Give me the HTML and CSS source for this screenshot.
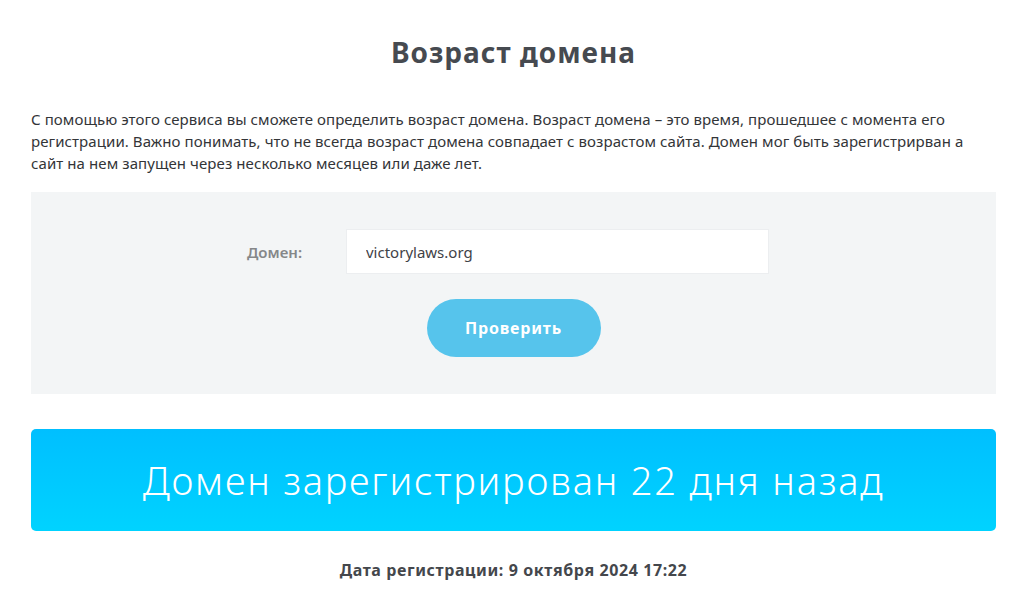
FILE: index.html
```html
<!DOCTYPE html>
<html lang="ru">
<head>
<meta charset="utf-8">
<title>Возраст домена</title>
<link rel="stylesheet" href="styles.css">
</head>
<body>
<main class="page">
  <h1 class="title">Возраст домена</h1>
  <p class="intro">С помощью этого сервиса вы сможете определить возраст домена. Возраст домена – это время, прошедшее с момента его регистрации. Важно понимать, что не всегда возраст домена совпадает с возрастом сайта. Домен мог быть зарегистрирван а сайт на нем запущен через несколько месяцев или даже лет.</p>
  <form class="check-form">
    <div class="field-row">
      <label class="field-label" for="domain">Домен:</label>
      <input class="field-input" id="domain" type="text" value="victorylaws.org">
    </div>
    <button class="check-btn" type="button">Проверить</button>
  </form>
  <div class="result">Домен зарегистрирован 22 дня назад</div>
  <p class="reg-date">Дата регистрации: 9 октября 2024 17:22</p>
</main>
</body>
</html>
```
FILE: styles.css
```css
* { box-sizing: border-box; }
html, body { margin: 0; padding: 0; background: #fff; }
body { font-family: "Noto Sans", "Open Sans", sans-serif; color: #3a3d42; }
.page { padding: 0 28px 0 31px; }
.title {
  margin: 0;
  padding-top: 35px;
  height: 108px;
  text-align: center;
  font-size: 28px;
  font-weight: 700;
  letter-spacing: 1px;
  line-height: 34px;
  color: #464a50;
}
.intro {
  margin: 0;
  font-size: 15px;
  line-height: 22px;
  letter-spacing: 0.08px;
  color: #333538;
}
.check-form {
  margin-top: 18px;
  background: #f3f5f6;
  height: 202px;
  padding-top: 37px;
  display: flex;
  flex-direction: column;
  align-items: center;
}
.field-row {
  display: flex;
  align-items: center;
  margin-right: 11px;
}
.field-label {
  width: 99px;
  font-size: 15px;
  font-weight: 600;
  color: #858789;
}
.field-input {
  width: 423px;
  height: 45px;
  border: 1px solid #eceef0;
  background: #fff;
  padding: 0 19px;
  font-family: inherit;
  font-size: 15px;
  color: #3f4247;
  outline: none;
}
.check-btn {
  margin-top: 25px;
  width: 174px;
  height: 58px;
  border: none;
  border-radius: 29px;
  background: #56c4ec;
  color: #fff;
  font-family: inherit;
  font-size: 16px;
  font-weight: 700;
  letter-spacing: 0.8px;
}
.result {
  margin-top: 35px;
  height: 102px;
  border-radius: 5px;
  background: linear-gradient(to bottom, #00bfff, #00d3ff);
  color: #fff;
  display: flex;
  align-items: center;
  justify-content: center;
  font-size: 38px;
  font-weight: 300;
  letter-spacing: 1.8px;
}
.reg-date {
  margin: 0;
  padding-top: 28px;
  text-align: center;
  font-size: 16px;
  font-weight: 700;
  letter-spacing: 0.6px;
  color: #44474c;
}
```
